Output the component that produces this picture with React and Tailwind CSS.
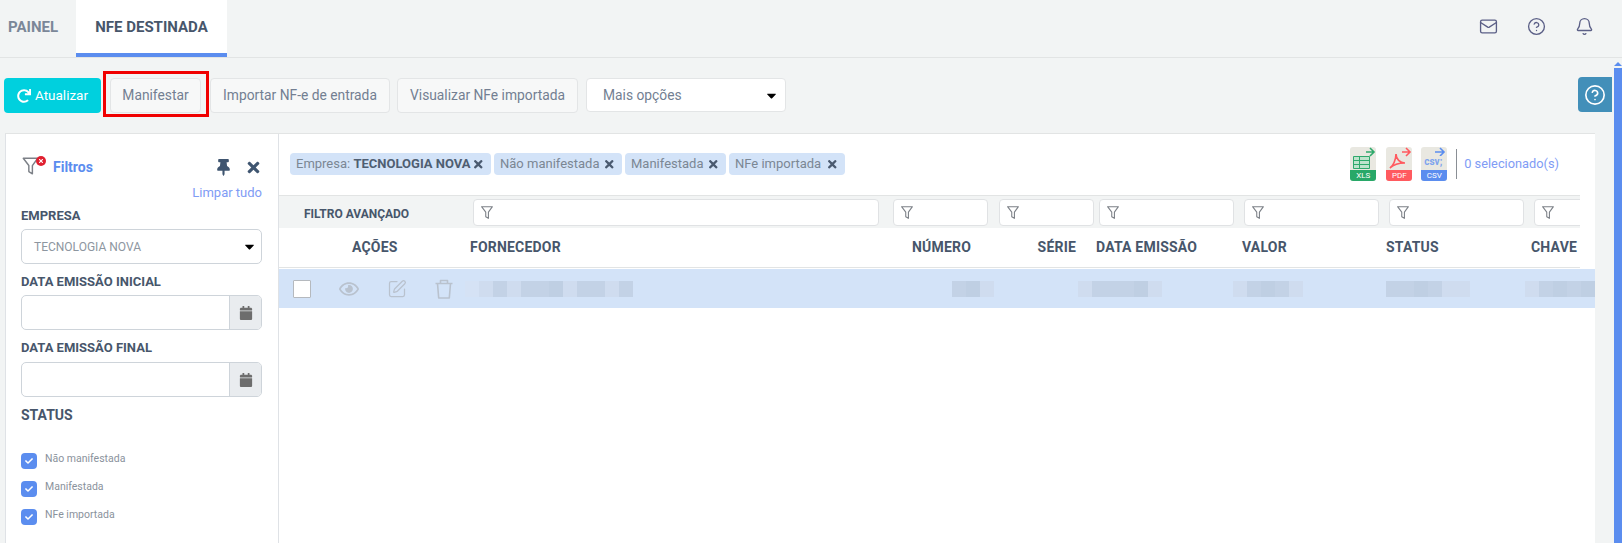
import React from "react";
import { FaThumbtack, FaTimes, FaCalendar, FaCheck, FaRedo, FaRegEye, FaCaretDown } from "react-icons/fa";
import { Mail, CircleHelp, Bell, SquarePen } from "lucide-react";

const Funnel = ({ className }) => (
  <svg viewBox="0 0 16 18" className={className} fill="none" stroke="#7c8087" strokeWidth="1.3" strokeLinejoin="round">
    <path d="M1.5 2h13L9.7 8.6V16L6.5 14V8.6z" />
  </svg>
);

const Caret = () => <FaCaretDown className="text-[15px] text-black" />;

const Btn = ({ children, className = "" }) => (
  <button className={`h-[35px] rounded-[4px] border border-[#e3e5e6] bg-[#f7f8f8] text-[13.8px] text-[#737f92] ${className}`}>{children}</button>
);

const Chip = ({ children, w }) => (
  <span className={`flex h-[22px] items-center justify-between rounded-[4px] bg-[#d3e3f8] pl-[6px] pr-[7px] text-[13px] text-[#7b8794] ${w}`}>
    <span>{children}</span>
    <FaTimes className="text-[12.5px] text-[#4a5a70]" />
  </span>
);

const Label = ({ children, className = "" }) => (
  <div className={`text-[13px] font-bold text-[#47566b] ${className}`}>{children}</div>
);

const DateInput = () => (
  <div className="flex h-[35px] rounded-[5px] border border-[#ced4da] bg-white">
    <div className="flex-1" />
    <div className="flex w-[32px] items-center justify-center rounded-r-[4px] border-l border-[#ced4da] bg-[#e9ecef]">
      <FaCalendar className="text-[14px] text-[#6d6d6d]" />
    </div>
  </div>
);

const Check = ({ children }) => (
  <div className="flex h-[28px] items-start">
    <span className="flex h-[16px] w-[16px] items-center justify-center rounded-[4px] bg-[#5b8def]">
      <FaCheck className="text-[8px] text-white" />
    </span>
    <span className="ml-[8px] -mt-[2px] text-[10.5px] leading-[16px] text-[#8a929c]">{children}</span>
  </div>
);

const FilterInput = ({ w, ml = "ml-[6px]" }) => (
  <div className={`flex h-[27px] shrink-0 items-center rounded-[4px] border border-[#e0e2e4] bg-white pl-[6px] ${w} ${ml}`}>
    <Funnel className="h-[15px] w-[14px]" />
  </div>
);

const Head = ({ children, className }) => (
  <div className={`shrink-0 text-[14px] font-bold tracking-[0.2px] text-[#47566b] ${className}`}>{children}</div>
);

const Blur = ({ cells, className = "" }) => (
  <div className={`flex h-[16px] shrink-0 ${className}`}>
    {cells.map((c, i) => (
      <div key={i} className="h-full w-[14px]" style={{ backgroundColor: c }} />
    ))}
  </div>
);

const Export = ({ label, band, children }) => (
  <div className="flex h-[34px] w-[26px] flex-col overflow-hidden rounded-[3px] bg-[#e9e8e1]">
    <div className="flex-1">{children}</div>
    <div className={`flex h-[11px] items-center justify-center text-[8px] leading-none text-white ${band}`}>{label}</div>
  </div>
);

export default function App() {
  const f = "#d5e2f5", a = "#cfdcef", b = "#c3d2e6", c = "#bfcfe3";
  return (
    <div className="h-[543px] w-[1622px] overflow-hidden bg-[#f2f4f4] font-['Roboto',sans-serif]">
      <div className="flex h-[58px] items-stretch border-b border-[#e2e4e4]">
        <div className="flex h-[57px] w-[76px] items-center pb-[3px] pl-[8px] text-[15px] font-bold text-[#7b8798]">PAINEL</div>
        <div className="flex h-[57px] w-[151px] items-center justify-center border-b-[4px] border-[#5b8def] bg-white pt-[1px] text-[15px] font-bold text-[#47566b]">NFE DESTINADA</div>
        <div className="flex flex-1 items-center justify-end pb-[5px] text-[#5b5f86]">
          <Mail className="mr-[29px] h-[19px] w-[19px]" strokeWidth={1.7} />
          <CircleHelp className="mr-[29px] h-[19px] w-[19px]" strokeWidth={1.7} />
          <Bell className="mr-[28px] h-[19px] w-[19px]" strokeWidth={1.7} />
        </div>
      </div>

      <div className="flex">
        <div className="flex h-[75px] flex-1 items-start pl-[4px] pt-[20px]">
          <button className="flex h-[35px] w-[97px] items-center justify-center gap-[4px] rounded-[4px] bg-[#00d0de] text-[13.5px] text-white">
            <FaRedo className="text-[14px]" /> Atualizar
          </button>
          <div className="relative ml-[9px]">
            <Btn className="w-[91px]">Manifestar</Btn>
            <div className="absolute -left-[7px] -top-[7px] h-[46px] w-[106px] border-[3px] border-[#f00000]" />
          </div>
          <Btn className="ml-[9px] w-[180px]">Importar NF-e de entrada</Btn>
          <Btn className="ml-[7px] w-[181px]">Visualizar NFe importada</Btn>
          <div className="ml-[8px] flex h-[34px] w-[200px] items-center justify-between rounded-[4px] border border-[#e3e5e6] bg-white pl-[16px] pr-[6px] text-[13.8px] text-[#737f92]">
            <span>Mais opções</span>
            <Caret />
          </div>
        </div>
        <div className="flex h-[75px] w-[44px] shrink-0 pt-[19px]">
          <div className="flex h-[35px] w-[34px] shrink-0 items-center justify-center rounded-l-[4px] bg-[#428fb9]">
            <CircleHelp className="h-[22px] w-[22px] text-white" strokeWidth={1.8} />
          </div>
          <div className="ml-[2px] -mt-[15px] flex h-[600px] w-[8px] shrink-0 flex-col items-center">
            <div className="h-0 w-0 shrink-0 border-x-[4px] border-b-[4px] border-x-transparent border-b-[#5b8def]" />
            <div className="mt-[2px] h-[590px] w-[8px] shrink-0 bg-[#5b8def]" />
          </div>
        </div>
      </div>

      <div className="ml-[5px] flex h-[410px] w-[1590px] border-t border-[#e2e4e4] bg-white">
        <div className="w-[274px] shrink-0 border-x border-[#dfe2e6] pl-[15px] pr-[16px]">
          <div className="flex h-[50px] items-center pt-[16px]">
            <div className="relative h-[22px] w-[27px]">
              <Funnel className="h-[20px] w-[19px]" />
              <span className="absolute left-[15px] top-0 flex h-[10px] w-[10px] items-center justify-center rounded-full bg-[#e02030]">
                <FaTimes className="text-[6px] text-white" />
              </span>
            </div>
            <span className="ml-[5px] text-[14px] font-bold text-[#5b8def]">Filtros</span>
            <FaThumbtack className="ml-auto text-[17px] text-[#3f5570]" />
            <FaTimes className="ml-[13px] text-[17px] text-[#3f5570]" />
          </div>
          <div className="mt-[1px] text-right text-[13px] leading-[16px] text-[#7f9cf5]">Limpar tudo</div>
          <Label className="mt-[7px] leading-[16px]">EMPRESA</Label>
          <div className="mt-[5px] flex h-[35px] items-center justify-between rounded-[5px] border border-[#ced4da] pl-[12px] pr-[4px] text-[12px] text-[#8d96a0]">
            <span>TECNOLOGIA NOVA</span>
            <Caret />
          </div>
          <Label className="mt-[10px] leading-[16px]">DATA EMISSÃO INICIAL</Label>
          <div className="mt-[5px]"><DateInput /></div>
          <Label className="mt-[10px] leading-[16px]">DATA EMISSÃO FINAL</Label>
          <div className="mt-[6px]"><DateInput /></div>
          <Label className="mt-[9px] text-[14px] leading-[18px]">STATUS</Label>
          <div className="mt-[29px]">
            <Check>Não manifestada</Check>
            <Check>Manifestada</Check>
            <Check>NFe importada</Check>
          </div>
        </div>

        <div className="min-w-0 flex-1">
          <div className="flex h-[61px] items-center pb-[1px]">
            <div className="ml-[11px] flex gap-[3px]">
              <Chip w="w-[201px]"><span>Empresa: <b className="text-[#4f5e72]">TECNOLOGIA NOVA</b></span></Chip>
              <Chip w="w-[128px]">Não manifestada</Chip>
              <Chip w="w-[101px]">Manifestada</Chip>
              <Chip w="w-[116px]">NFe importada</Chip>
            </div>
            <div className="ml-auto flex items-center pr-[36px]">
              <Export label="XLS" band="bg-[#28a868]">
                <svg viewBox="0 0 26 23" className="h-[23px] w-[26px]">
                  <path d="M3.5 9.5h16v12h-16z" fill="#bfe3cd" stroke="#2fa96c" />
                  <path d="M3 13.5h17M3 17.5h17M9.5 9v13" stroke="#2fa96c" strokeWidth="1" />
                  <path d="M16 5h8M20 1l4 4-4 4" fill="none" stroke="#2fa96c" strokeWidth="1.6" />
                </svg>
              </Export>
              <div className="ml-[10px]">
                <Export label="PDF" band="bg-[#ff5a5f]">
                  <svg viewBox="0 0 26 23" className="h-[23px] w-[26px]">
                    <path d="M4 21c3-2 6-8 6-14 0 5 4 9 9 9-5 0-11 1-15 5z" fill="none" stroke="#ff5a5f" strokeWidth="1.7" />
                    <path d="M16 5h8M20 1l4 4-4 4" fill="none" stroke="#ff5a5f" strokeWidth="1.6" />
                  </svg>
                </Export>
              </div>
              <div className="ml-[9px]">
                <Export label="CSV" band="bg-[#5b8def]">
                  <div className="h-[23px] w-[26px]">
                    <svg viewBox="0 0 26 9" className="h-[9px] w-[26px]">
                      <path d="M14 5h9M19 1l4 4-4 4" fill="none" stroke="#5b8def" strokeWidth="1.6" />
                    </svg>
                    <div className="pl-[3px] text-[10px] font-bold leading-[12px] text-[#7ea4ee]">csv;</div>
                  </div>
                </Export>
              </div>
              <div className="ml-[9px] h-[30px] w-px bg-[#8a8f95]" />
              <span className="ml-[7px] text-[12.8px] text-[#7f9cf5]">0 selecionado(s)</span>
            </div>
          </div>

          <div className="w-[1301px] overflow-hidden">
            <div className="flex h-[33px] items-center border-t border-[#e2e4e4] bg-[#f2f4f4]">
              <div className="w-[188px] shrink-0 pl-[25px] pt-[3px] text-[12px] font-bold text-[#47566b]">FILTRO AVANÇADO</div>
              <FilterInput w="w-[406px]" ml="ml-[6px]" />
              <FilterInput w="w-[95px]" ml="ml-[14px]" />
              <FilterInput w="w-[95px]" ml="ml-[11px]" />
              <FilterInput w="w-[135px]" ml="ml-[5px]" />
              <FilterInput w="w-[135px]" ml="ml-[10px]" />
              <FilterInput w="w-[135px]" ml="ml-[10px]" />
              <FilterInput w="w-[135px]" ml="ml-[10px]" />
            </div>
            <div className="flex h-[40px] items-center border-b border-[#e2e4e4] whitespace-nowrap">
              <Head className="w-[188px] pl-[73px]">AÇÕES</Head>
              <Head className="w-[416px] pl-[3px]">FORNECEDOR</Head>
              <Head className="w-[88px] text-right">NÚMERO</Head>
              <Head className="w-[105px] text-right">SÉRIE</Head>
              <Head className="w-[166px] pl-[20px]">DATA EMISSÃO</Head>
              <Head className="w-[144px]">VALOR</Head>
              <Head className="w-[145px]">STATUS</Head>
              <Head className="">CHAVE</Head>
            </div>
          </div>
          <div className="mt-[1px] flex h-[39px] items-center overflow-hidden bg-[#d3e3f8]">
            <div className="ml-[14px] h-[18px] w-[18px] shrink-0 rounded-[1px] border border-[#b5b9be] bg-white" />
            <FaRegEye className="ml-[28px] shrink-0 text-[20px] text-[#b9c2ce]" />
            <SquarePen className="ml-[28px] h-[20px] w-[20px] shrink-0 text-[#b9c2ce]" strokeWidth={1.5} />
            <svg viewBox="0 0 20 20" className="ml-[27px] h-[20px] w-[20px] shrink-0" fill="none" stroke="#b9c2ce" strokeWidth="1.6" strokeLinejoin="round">
              <path d="M1.5 4.5h17M6.5 4.5V1.5h7v3M3.5 4.5l1.2 14.5h10.6l1.2-14.5" />
            </svg>
            <Blur className="ml-[11px]" cells={[f, a, b, a, b, b, c, a, b, b, a, b]} />
            <Blur className="ml-[319px]" cells={[b, c, a]} />
            <Blur className="ml-[84px]" cells={[a, b, b, b, c, a]} />
            <Blur className="ml-[71px]" cells={[a, b, c, b, a]} />
            <Blur className="ml-[83px]" cells={[b, b, c, b, a, a]} />
            <Blur className="ml-[55px]" cells={[a, b, c, b, c, c]} />
          </div>
        </div>
      </div>
    </div>
  );
}
